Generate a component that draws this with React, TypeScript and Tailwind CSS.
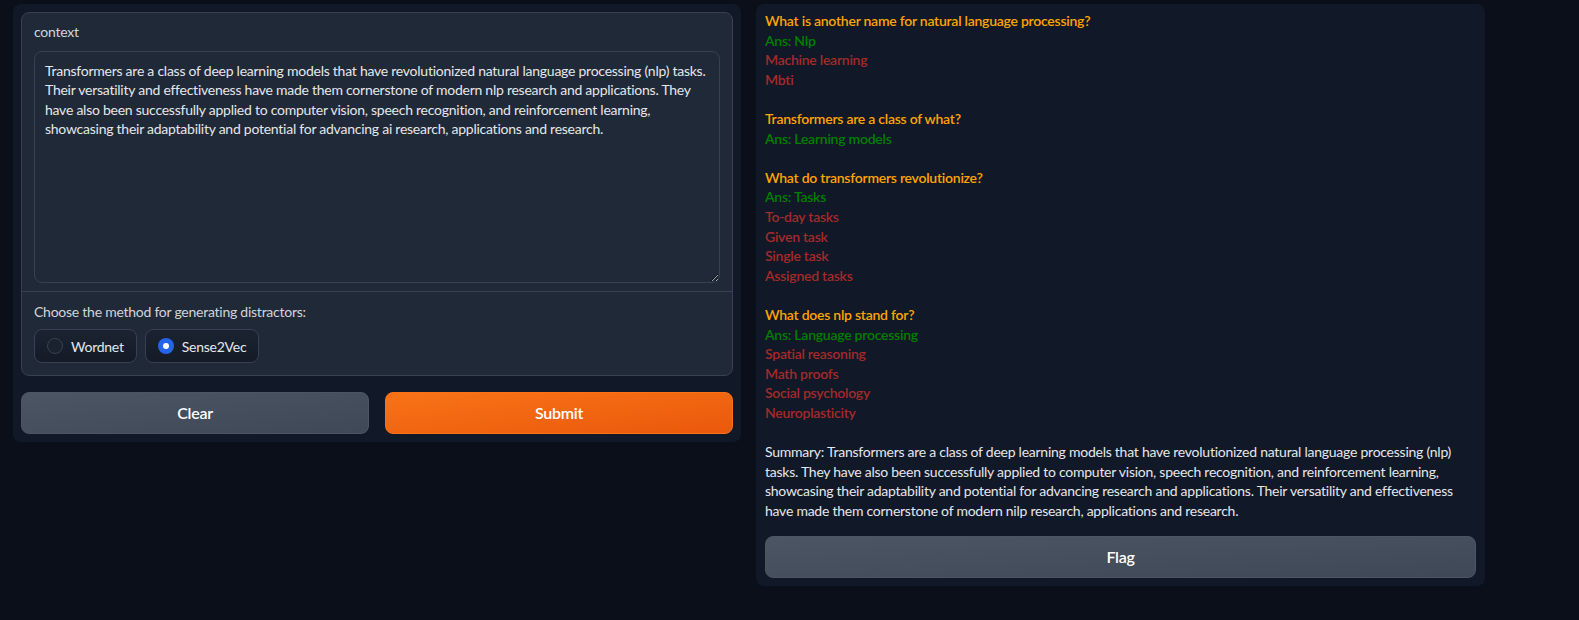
import React from "react";

const CONTEXT =
  "Transformers are a class of deep learning models that have revolutionized natural language processing (nlp) tasks. Their versatility and effectiveness have made them cornerstone of modern nlp research and applications. They have also been successfully applied to computer vision, speech recognition, and reinforcement learning, showcasing their adaptability and potential for advancing ai research, applications and research.";

const SUMMARY =
  "Summary: Transformers are a class of deep learning models that have revolutionized natural language processing (nlp) tasks. They have also been successfully applied to computer vision, speech recognition, and reinforcement learning, showcasing their adaptability and potential for advancing research and applications. Their versatility and effectiveness have made them cornerstone of modern nilp research, applications and research.";

const questions = [
  {
    q: "What is another name for natural language processing?",
    ans: "Nlp",
    distractors: ["Machine learning", "Mbti"],
  },
  { q: "Transformers are a class of what?", ans: "Learning models", distractors: [] },
  {
    q: "What do transformers revolutionize?",
    ans: "Tasks",
    distractors: ["To-day tasks", "Given task", "Single task", "Assigned tasks"],
  },
  {
    q: "What does nlp stand for?",
    ans: "Language processing",
    distractors: ["Spatial reasoning", "Math proofs", "Social psychology", "Neuroplasticity"],
  },
];

function Radio({ label, checked }: { label: string; checked?: boolean }) {
  return (
    <label className="flex items-center gap-2 h-[34px] pl-3 pr-3 rounded-lg border border-[#374151] bg-gradient-to-b from-[#1b2331] to-[#141b27] text-[14px] text-[#e5e7eb]">
      {checked ? (
        <span className="w-4 h-4 rounded-full bg-[#2563eb] flex items-center justify-center">
          <span className="w-[6px] h-[6px] rounded-full bg-white" />
        </span>
      ) : (
        <span className="w-4 h-4 rounded-full border border-[#374151] bg-[#1a2230]" />
      )}
      <span>{label}</span>
    </label>
  );
}

export default function App() {
  return (
    <main
      className="min-h-[620px] bg-[#0b0f19] flex items-start gap-[15px] pl-[13px] pt-[4px] tracking-[-0.25px]"
      style={{ fontFamily: "Lato, 'Liberation Sans', sans-serif" }}
    >
      {/* left column */}
      <section className="w-[728px] bg-[#111827] rounded-lg p-2 flex flex-col gap-4">
        <div className="bg-[#1f2937] border border-[#374151] rounded-lg">
          <div className="px-3 pt-[9px] pb-[8px]">
            <div className="text-[14px] leading-5 text-[#d1d5db] mb-[9px]">context</div>
            <textarea
              readOnly
              spellCheck={false}
              defaultValue={CONTEXT}
              className="block w-full h-[232px] rounded-lg border border-[#374151] bg-[#1f2937] px-[10px] py-[9px] text-[14px] leading-[19.4px] tracking-[-0.25px] text-[#e5e7eb] outline-none resize-y"
            />
          </div>
          <div className="border-t border-[#374151] px-3 pt-[10px] pb-[12px]">
            <div className="text-[14px] leading-5 text-[#d1d5db] mb-[7px]">
              Choose the method for generating distractors:
            </div>
            <div className="flex gap-2">
              <Radio label="Wordnet" />
              <Radio label="Sense2Vec" checked />
            </div>
          </div>
        </div>
        <div className="flex gap-4">
          <button className="flex-1 h-[42px] rounded-lg border border-[#4b5563] bg-gradient-to-br from-[#4b5563] to-[#3f4856] text-white text-[16px] font-semibold">
            Clear
          </button>
          <button className="flex-1 h-[42px] rounded-lg border border-[#f97316] bg-gradient-to-br from-[#f97316] to-[#ea580c] text-white text-[16px] font-semibold">
            Submit
          </button>
        </div>
      </section>

      {/* right column */}
      <section className="w-[729px] bg-[#111827] rounded-lg px-[9px] pt-[7px] pb-2">
        <div className="text-[14px] leading-[19.6px]">
          {questions.map((item, i) => (
            <div key={i}>
              <div className="font-semibold text-[#ffa500]">{item.q}</div>
              <div className="font-semibold text-[#008000]">Ans: {item.ans}</div>
              {item.distractors.map((d) => (
                <div key={d} className="font-semibold text-[#a52a2a]">
                  {d}
                </div>
              ))}
              <div className="h-[19.6px]" />
            </div>
          ))}
          <p className="text-[#e5e7eb]">{SUMMARY}</p>
        </div>
        <button className="mt-4 w-full h-[42px] rounded-lg border border-[#4b5563] bg-gradient-to-br from-[#4b5563] to-[#3f4856] text-white text-[16px] font-semibold">
          Flag
        </button>
      </section>
    </main>
  );
}
